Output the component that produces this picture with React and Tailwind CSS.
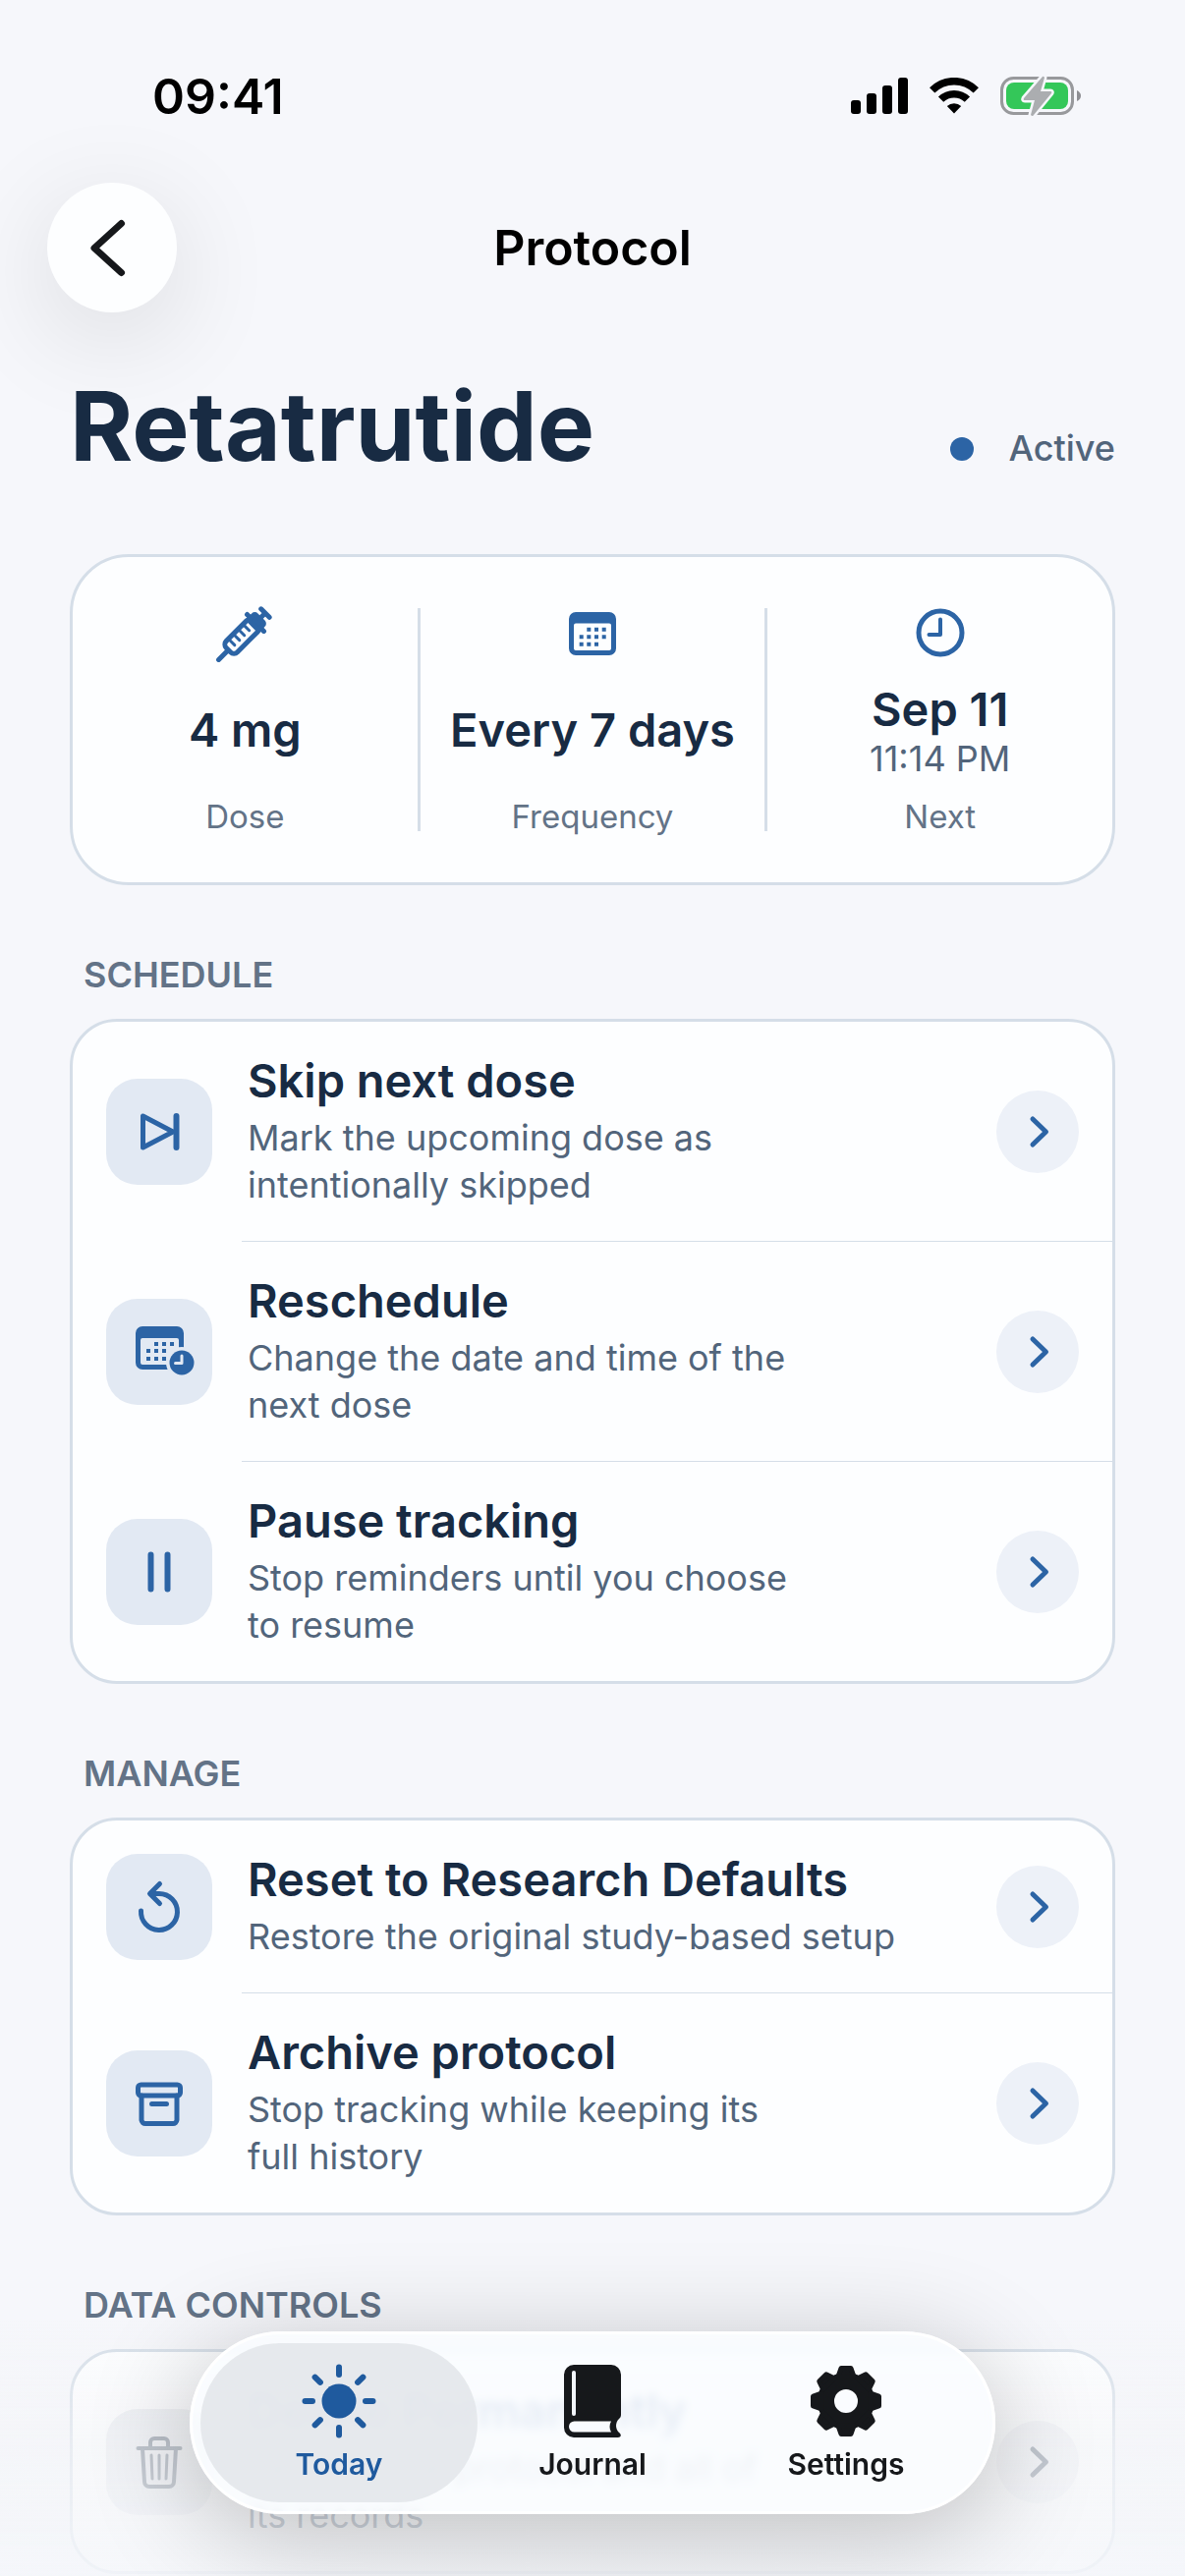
import React, { useState } from 'react';
import clsx from 'clsx';

// All icons share one grid with the origin in the middle
function Icon({ children, className }) {
  return (
    <svg
      viewBox="-30 -30 60 60"
      className={clsx('size-[60px] flex-none overflow-visible', className)}
      fill="none"
      stroke="currentColor"
      strokeWidth="5"
      strokeLinecap="round"
      strokeLinejoin="round"
      aria-hidden="true"
    >
      {children}
    </svg>
  );
}

const SyringeIcon = () => (
  <Icon>
    <g transform="translate(-1 2) rotate(45)">
      <path d="M0 23V36M-6 -31H6M0 -30V-22" />
      <rect x="-8" y="-17" width="16" height="39" rx="5" />
      <path d="M-12 -17H12" />
      <rect x="-7" y="-23" width="14" height="9" rx="2" fill="currentColor" />
      <path d="M-7 -7H1M-7 0H1M-7 7H1M-7 14H1" strokeWidth="3" />
    </g>
  </Icon>
);

const CalendarIcon = () => (
  <Icon>
    <path
      d="M-17 -21H17A7 7 0 0 1 24 -14V16A7 7 0 0 1 17 23H-17A7 7 0 0 1 -24 16V-14A7 7 0 0 1 -17 -21ZM-17 -9.500A2 2 0 0 0 -19 -7.500V16A2 2 0 0 0 -17 18H17A2 2 0 0 0 19 16V-7.500A2 2 0 0 0 17 -9.500Z"
      fill="currentColor"
      fillRule="evenodd"
      stroke="none"
    />
    <path
      d="M-3.700 -3.300h.01M4 -3.300h.01M11.700 -3.300h.01M-11.300 4.300h.01M-3.700 4.300h.01M4 4.300h.01M11.700 4.300h.01M-11.300 11.700h.01M-3.700 11.700h.01M4 11.700h.01"
      strokeWidth="4"
      strokeLinecap="square"
    />
  </Icon>
);

const ClockIcon = () => (
  <Icon>
    <circle r="22" />
    <path d="M0 -13.500V2H-11.500" strokeWidth="4" />
  </Icon>
);

const SkipIcon = () => (
  <Icon>
    <path d="M-16.500 -16V16L14 0Z" />
    <path d="M17.500 -16V16" strokeWidth="6" />
  </Icon>
);

const RescheduleIcon = () => (
  <Icon>
    <g transform="translate(-1 0)">
      <path
        d="M-16 -26H19A7 7 0 0 1 26 -19V11A7 7 0 0 1 19 18H-16A7 7 0 0 1 -23 11V-19A7 7 0 0 1 -16 -26ZM-16 -14A2 2 0 0 0 -18 -12V11A2 2 0 0 0 -16 13H19A2 2 0 0 0 21 11V-12A2 2 0 0 0 19 -14Z"
        fill="currentColor"
        fillRule="evenodd"
        stroke="none"
      />
      <path
        d="M-2 -8h.01M6 -8h.01M14 -8h.01M-10 -1h.01M-2 -1h.01M6 -1h.01M-10 7h.01M-2 7h.01M6 7h.01"
        strokeWidth="4"
        strokeLinecap="square"
      />
      <circle cx="24" cy="11" r="16" fill="#e2e9f3" stroke="none" />
      <circle cx="24" cy="11" r="12.500" fill="currentColor" stroke="none" />
      <path d="M24 4V11.500H17.500" stroke="#e2e9f3" strokeWidth="3" />
    </g>
  </Icon>
);

const PauseIcon = () => (
  <Icon>
    <path d="M-8.500 -17.500V17.500M8.500 -17.500V17.500" strokeWidth="6" />
  </Icon>
);

const ResetIcon = () => (
  <Icon>
    <path d="M-18.500 4A18.500 18.500 0 1 0 0 -13.500H-8" />
    <path d="M.500 -23.500L-9.500 -13.500L.500 -3.500" />
  </Icon>
);

const ArchiveIcon = () => (
  <Icon>
    <rect x="-21.500" y="-19" width="43" height="11" rx="3" />
    <path d="M-18 -8V17A4 4 0 0 0 -14 20.500H14A4 4 0 0 0 18 17V-8M-7.500 .500H7.500" />
  </Icon>
);

const TrashIcon = () => (
  <Icon>
    <path d="M-21.500 -14H21.500M-9 -14V-20A4 4 0 0 1 -5 -24H5A4 4 0 0 1 9 -20V-14" strokeWidth="4" />
    <path d="M-17 -14L-15 20A5 5 0 0 0 -10 25H10A5 5 0 0 0 15 20L17 -14" strokeWidth="4" />
    <path d="M-8 -7L-7 17M0 -7V17M8 -7L7 17" strokeWidth="3" />
  </Icon>
);

const ChevronIcon = () => (
  <Icon>
    <path d="M-5 -13L8.500 0L-5 13" />
  </Icon>
);

const SunIcon = () => (
  <Icon>
    <circle r="17.500" fill="currentColor" stroke="none" />
    {[0, 45, 90, 135, 180, 225, 270, 315].map((angle) => (
      <path key={angle} d="M0 -27V-34.500" strokeWidth="6" transform={`rotate(${angle})`} />
    ))}
  </Icon>
);

const BookIcon = () => (
  <Icon>
    <path
      d="M-19 -37H19A10 10 0 0 1 29 -27V14C29 16 28 17 27 18C23 22 23 28 27 32C30 34 29 37 26 37H-19A10 10 0 0 1 -29 27V-27A10 10 0 0 1 -19 -37Z"
      fill="currentColor"
      stroke="none"
    />
    <path d="M-19 -29V13" stroke="#f2f5fb" strokeWidth="4" />
    <path d="M-18.500 20.500H19C17 24 17 28 19 31.500H-18.500A5.500 5.500 0 0 1 -18.500 20.500Z" fill="#f9fbff" stroke="none" />
  </Icon>
);

const GearIcon = () => (
  <Icon>
    <circle r="20.500" strokeWidth="17" />
    {[0, 45, 90, 135, 180, 225, 270, 315].map((angle) => (
      <path
        key={angle}
        d="M-8 -25L-5 -33.500H5L8 -25Z"
        fill="currentColor"
        transform={`rotate(${angle})`}
      />
    ))}
  </Icon>
);

function StatusBar() {
  return (
    <div className="flex h-16 items-center justify-between pr-[106px] pl-[155px] text-black">
      <time className="text-[50px] font-semibold">09:41</time>
      <div className="flex items-center gap-[22px]">
        <svg viewBox="0 0 58 38" className="h-[38px] w-[58px]" fill="currentColor" aria-hidden="true">
          <rect x="0" y="23" width="10" height="14" rx="3" />
          <rect x="16" y="16" width="10" height="21" rx="3" />
          <rect x="32" y="8" width="10" height="29" rx="3" />
          <rect x="48" y="0" width="10" height="37" rx="3" />
        </svg>
        <svg viewBox="0 0 50 38" className="h-[38px] w-[50px]" fill="none" stroke="currentColor" strokeWidth="7.500" aria-hidden="true">
          <path d="M2.700 12.900A31.500 31.500 0 0 1 47.300 12.900" />
          <path d="M11.600 22.200A19 19 0 0 1 38.400 22.200" />
          <path d="M25 36.500L17.800 29A11 11 0 0 1 32.200 29Z" fill="currentColor" stroke="none" />
        </svg>
        <svg viewBox="0 0 82 42" className="h-[42px] w-[82px]" fill="none" aria-hidden="true">
          <rect x="1.500" y="2.500" width="72" height="36" rx="12" stroke="#98999c" strokeWidth="3" />
          <rect x="6" y="7" width="63" height="27" rx="8" fill="#34c759" />
          <path d="M78 15Q82 17 82 20.500Q82 24 78 26Z" fill="#8e8e93" />
          <path
            d="M43 1L24 23Q23 25 25 25H35L31 40Q33 42 34 40L52 18Q53 16 51 16H41L45 2Q44 0 43 1Z"
            fill="#abadb0"
            stroke="#f6f7fb"
            strokeWidth="5"
            strokeLinejoin="round"
            paintOrder="stroke"
          />
        </svg>
      </div>
    </div>
  );
}

function Stat({ icon, value, detail, label }) {
  return (
    <div className="flex min-h-[227px] flex-1 flex-col items-center text-center">
      <div className="flex h-[50px] items-center text-[#2c64a5]">{icon}</div>
      <div className="flex flex-1 flex-col justify-center">
        <span className="text-[47px] leading-[58px] font-semibold text-[#182b43]">{value}</span>
        {detail && <span className="text-[36px] leading-[42px] text-[#52657b]">{detail}</span>}
      </div>
      <span className="text-[33px] leading-[30px] text-[#637387]">{label}</span>
    </div>
  );
}

function ActionRow({ icon, title, description, muted }) {
  return (
    <li className="group">
      <button className="flex w-full items-center gap-9 px-[34px] py-[33px] text-left">
        <span
          className={clsx(
            'flex size-[108px] flex-none items-center justify-center rounded-[32px]',
            muted ? 'bg-[#e9ecf1] text-[#5d6b7c]' : 'bg-[#e2e9f3] text-[#2c64a5]'
          )}
        >
          {icon}
        </span>
        <span className="flex min-w-0 flex-1 flex-col gap-[7px]">
          <span className={clsx('text-[47px] leading-[54px] font-semibold', muted ? 'text-[#3f68a8]' : 'text-[#182b43]')}>
            {title}
          </span>
          <span className="text-[36px] leading-[48px] whitespace-pre-line text-[#52657b]">{description}</span>
        </span>
        <span
          className={clsx(
            'flex size-[84px] flex-none items-center justify-center rounded-full',
            muted ? 'bg-[#f0f2f6] text-[#5d6b7c]' : 'bg-[#edf1f8] text-[#2c64a5]'
          )}
        >
          <ChevronIcon />
        </span>
      </button>
      <div className="ml-[172px] h-px bg-[#d5dee8] group-last:hidden" />
    </li>
  );
}

const sections = [
  {
    title: 'SCHEDULE',
    rows: [
      { icon: <SkipIcon />, title: 'Skip next dose', description: 'Mark the upcoming dose as\nintentionally skipped' },
      { icon: <RescheduleIcon />, title: 'Reschedule', description: 'Change the date and time of the\nnext dose' },
      { icon: <PauseIcon />, title: 'Pause tracking', description: 'Stop reminders until you choose\nto resume' },
    ],
  },
  {
    title: 'MANAGE',
    rows: [
      { icon: <ResetIcon />, title: 'Reset to Research Defaults', description: 'Restore the original study-based setup' },
      { icon: <ArchiveIcon />, title: 'Archive protocol', description: 'Stop tracking while keeping its\nfull history' },
    ],
  },
  {
    title: 'DATA CONTROLS',
    rows: [
      { icon: <TrashIcon />, title: 'Delete Permanently', description: 'Remove the protocol and all of\nits records', muted: true },
    ],
  },
];

const tabs = [
  { id: 'today', label: 'Today', icon: <SunIcon /> },
  { id: 'journal', label: 'Journal', icon: <BookIcon /> },
  { id: 'settings', label: 'Settings', icon: <GearIcon /> },
];

function TabBar({ active, onChange }) {
  return (
    <nav className="fixed inset-x-0 bottom-[63px] z-20 flex justify-center">
      <div className="flex h-[186px] rounded-full border-3 border-white bg-[#fafcff]/80 px-5 shadow-[0_20px_110px_rgba(0,0,0,0.24)] backdrop-blur-[5px]">
        {tabs.map((tab) => (
          <button
            key={tab.id}
            onClick={() => onChange(tab.id)}
            className={clsx(
              'relative flex w-[258px] flex-col items-center pt-[38px]',
              active === tab.id ? 'text-[#1f5a9e]' : 'text-[#16181b]'
            )}
          >
            {active === tab.id && <span className="absolute -inset-x-3 inset-y-[9px] -z-10 rounded-full bg-[#e3e6ea]/85" />}
            {tab.icon}
            <span className="mt-4 text-[30px] leading-[36px] font-semibold">{tab.label}</span>
          </button>
        ))}
      </div>
    </nav>
  );
}

export default function App() {
  const [tab, setTab] = useState('today');

  return (
    <div className="min-h-screen bg-[#f6f7fb] pt-[66px] font-['Inter',sans-serif]">
      <StatusBar />

      <header className="mt-14 grid grid-cols-[132px_1fr_132px] items-center px-12">
        <button
          aria-label="Back"
          className="flex size-[132px] items-center justify-center rounded-full bg-[#fdfeff] text-[#16181b] shadow-[0_24px_110px_rgba(0,0,0,0.12)]"
        >
          <Icon>
            <path d="M9.500 -24.500L-18 .500L9.500 25.500" strokeWidth="7" />
          </Icon>
        </button>
        <span className="text-center text-[50px] font-semibold text-black">Protocol</span>
      </header>

      <main className="px-[71px]">
        <div className="mt-14 flex items-baseline justify-between">
          <h1 className="text-[98px] leading-[120px] font-bold text-[#182b43]">Retatrutide</h1>
          <p className="text-[36px] font-medium text-[#52657b]">
            <span className="mr-9 inline-block size-6 rounded-full bg-[#2c64a5]" />
            Active
          </p>
        </div>

        <section className="mt-[70px] flex rounded-[60px] border-3 border-[#d5dee8] bg-[#fdfeff] py-[52px]">
          <Stat icon={<SyringeIcon />} value="4 mg" label="Dose" />
          <div className="w-[3px] bg-[#d5dee8]" />
          <Stat icon={<CalendarIcon />} value="Every 7 days" label="Frequency" />
          <div className="w-[3px] bg-[#d5dee8]" />
          <Stat icon={<ClockIcon />} value="Sep 11" detail="11:14 PM" label="Next" />
        </section>

        {sections.map((section) => (
          <section key={section.title} className="mt-[68px]">
            <h2 className="pl-[14px] text-[36px] leading-[46px] font-semibold text-[#637387]">{section.title}</h2>
            <ul className="mt-[22px] rounded-[48px] border-3 border-[#d5dee8] bg-[#fdfeff]">
              {section.rows.map((row) => (
                <ActionRow key={row.title} {...row} />
              ))}
            </ul>
          </section>
        ))}
      </main>

      {/* Fades the list out behind the tab bar */}
      <div className="pointer-events-none fixed inset-x-0 bottom-0 z-10 h-[260px] bg-linear-to-b from-[#f4f6fa]/0 via-[#f4f5f8]/65 to-[#f4f6fa]/85" />
      <TabBar active={tab} onChange={setTab} />
    </div>
  );
}
